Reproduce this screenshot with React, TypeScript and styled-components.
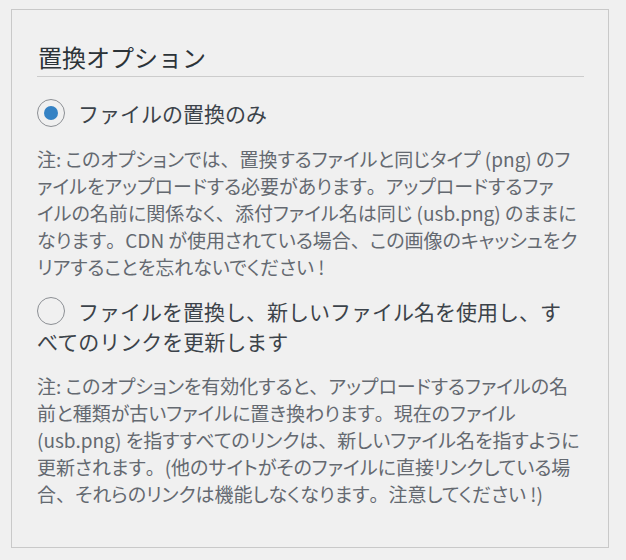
import React from "react";
import styled, { createGlobalStyle } from "styled-components";

const Global = createGlobalStyle`
  html, body { margin: 0; padding: 0; background: #f0f0f0; }
  body { font-family: "Noto Sans CJK JP", "Noto Sans", sans-serif; }
`;

const Page = styled.div`
  padding: 9px 17px 12px 11px;
`;

const Panel = styled.section`
  box-sizing: border-box;
  width: 598px;
  height: 539px;
  border: 1px solid #c9c9c9;
  padding: 30px 24px 0 25px;
`;

const Title = styled.h3`
  margin: 0;
  padding: 0 0 2px 1px;
  font-size: 24px;
  line-height: 34px;
  font-weight: 400;
  color: #2c3338;
  border-bottom: 1px solid #cccccc;
`;

const Option = styled.div<{ $gap: number }>`
  margin-top: ${(p) => p.$gap}px;
  font-size: 21px;
  line-height: 30px;
  color: #3c434a;
  white-space: nowrap;
`;

const Radio = styled.span<{ $checked?: boolean }>`
  display: inline-block;
  box-sizing: border-box;
  width: 28px;
  height: 28px;
  margin: 1px 13px 0 0;
  vertical-align: top;
  border: 1px solid #8c8f94;
  border-radius: 50%;
  position: relative;
  &::after {
    content: "";
    display: ${(p) => (p.$checked ? "block" : "none")};
    position: absolute;
    left: 6px;
    top: 6px;
    width: 14px;
    height: 14px;
    border-radius: 50%;
    background: #3582c4;
  }
`;

const Description = styled.p<{ $gap: number }>`
  margin: ${(p) => p.$gap}px 0 0;
  font-size: 19px;
  line-height: 27px;
  color: #646970;
  font-feature-settings: "palt";
  white-space: nowrap;
`;

const Line = styled.span`
  display: block;
`;

const Punct = styled.span`
  font-feature-settings: normal;
`;

function withPunct(text: string) {
  return text.split(/([、。])/).map((part, i) =>
    part === "、" || part === "。" ? <Punct key={i}>{part}</Punct> : part
  );
}

const desc1 = [
  "注: このオプションでは、置換するファイルと同じタイプ (png) のフ",
  "ァイルをアップロードする必要があります。アップロードするファ",
  "イルの名前に関係なく、添付ファイル名は同じ (usb.png) のままに",
  "なります。CDN が使用されている場合、この画像のキャッシュをク",
  "リアすることを忘れないでください !",
];

const desc2 = [
  "注: このオプションを有効化すると、アップロードするファイルの名",
  "前と種類が古いファイルに置き換わります。現在のファイル",
  "(usb.png) を指すすべてのリンクは、新しいファイル名を指すように",
  "更新されます。(他のサイトがそのファイルに直接リンクしている場",
  "合、それらのリンクは機能しなくなります。注意してください !)",
];

export default function App() {
  return (
    <>
      <Global />
      <Page>
        <Panel>
          <Title>置換オプション</Title>
          <Option $gap={21}>
            <Radio $checked />
            ファイルの置換のみ
          </Option>
          <Description $gap={17}>
            {desc1.map((l) => (
              <Line key={l}>{withPunct(l)}</Line>
            ))}
          </Description>
          <Option $gap={16}>
            <Radio />
            ファイルを置換し、新しいファイル名を使用し、す
            <br />
            べてのリンクを更新します
          </Option>
          <Description $gap={16}>
            {desc2.map((l) => (
              <Line key={l}>{withPunct(l)}</Line>
            ))}
          </Description>
        </Panel>
      </Page>
    </>
  );
}
